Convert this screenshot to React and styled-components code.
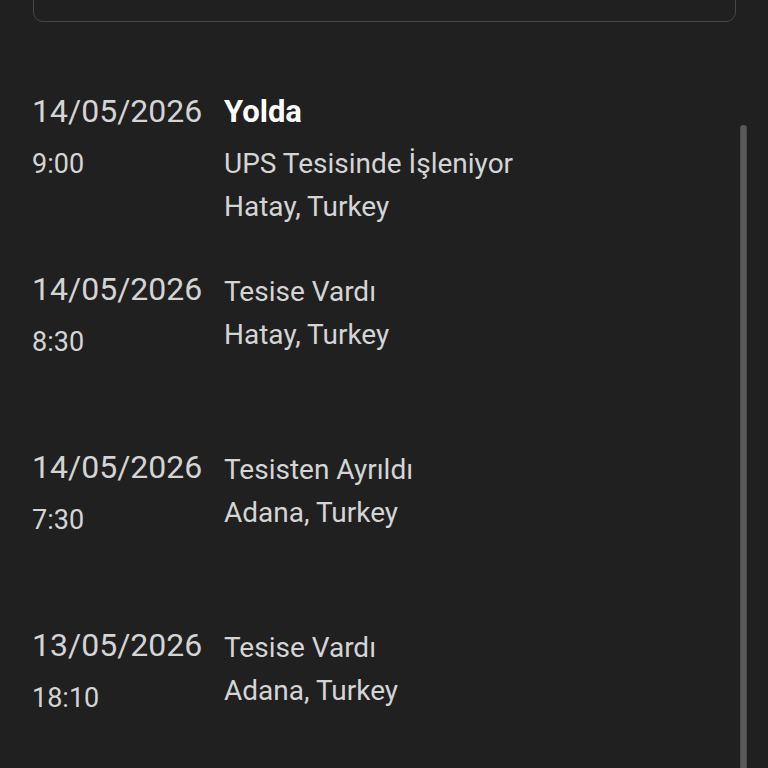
import React from 'react';
import styled, { createGlobalStyle } from 'styled-components';

const GlobalStyle = createGlobalStyle`
  html, body {
    margin: 0;
    padding: 0;
    background: #202020;
    height: 100%;
    overflow: hidden;
  }
  body {
    font-family: Roboto, "Noto Sans", sans-serif;
    color: #d0d0d0;
  }
`;

const Page = styled.div`
  position: relative;
  width: 768px;
  height: 768px;
  overflow: hidden;
  background: #202020;
`;

const SummaryCard = styled.div`
  margin: -60px 32px 0 33px;
  height: 82px;
  box-sizing: border-box;
  border: 1.5px solid #474747;
  border-radius: 10px;
`;

const List = styled.div`
  padding: 67px 0 0 32px;
  display: flex;
  flex-direction: column;
`;

const Row = styled.div`
  display: grid;
  grid-template-columns: 192px 1fr;
  min-height: 178px;
  align-items: start;
`;

const When = styled.div`
  display: flex;
  flex-direction: column;
  gap: 9px;
`;

const DateText = styled.div`
  font-size: 32px;
  line-height: 44px;
  color: #d4d4d4;
`;

const TimeText = styled.div`
  font-size: 27px;
  line-height: 44px;
  color: #d4d4d4;
`;

const Details = styled.div`
  display: flex;
  flex-direction: column;
  padding-top: ${p => (p.$current ? 0 : 3)}px;
`;

const Status = styled.div`
  font-size: ${p => (p.$current ? 31 : 28)}px;
  font-weight: ${p => (p.$current ? 700 : 400)};
  color: ${p => (p.$current ? '#ffffff' : '#d4d4d4')};
  line-height: ${p => (p.$current ? 46 : 43)}px;
  margin-bottom: ${p => (p.$current ? 7 : 0)}px;
`;

const Line = styled.div`
  font-size: 28px;
  line-height: 43px;
  color: #d4d4d4;
`;

const ScrollThumb = styled.div`
  position: absolute;
  left: 740px;
  top: 125px;
  bottom: 0;
  width: 7px;
  border-radius: 4px 4px 0 0;
  background: #5a5a5a;
  box-shadow: inset 1px 0 0 #4a4a4a, inset -1px 0 0 #4a4a4a;
`;

const events = [
  { date: '14/05/2026', time: '9:00', status: 'Yolda', current: true, lines: ['UPS Tesisinde İşleniyor', 'Hatay, Turkey'] },
  { date: '14/05/2026', time: '8:30', status: 'Tesise Vardı', lines: ['Hatay, Turkey'] },
  { date: '14/05/2026', time: '7:30', status: 'Tesisten Ayrıldı', lines: ['Adana, Turkey'] },
  { date: '13/05/2026', time: '18:10', status: 'Tesise Vardı', lines: ['Adana, Turkey'] },
];

export default function App() {
  return (
    <Page>
      <GlobalStyle />
      <SummaryCard />
      <List>
        {events.map((ev, i) => (
          <Row key={i}>
            <When>
              <DateText>{ev.date}</DateText>
              <TimeText>{ev.time}</TimeText>
            </When>
            <Details $current={ev.current}>
              <Status $current={ev.current}>{ev.status}</Status>
              {ev.lines.map(l => (
                <Line key={l}>{l}</Line>
              ))}
            </Details>
          </Row>
        ))}
      </List>
      <ScrollThumb />
    </Page>
  );
}
